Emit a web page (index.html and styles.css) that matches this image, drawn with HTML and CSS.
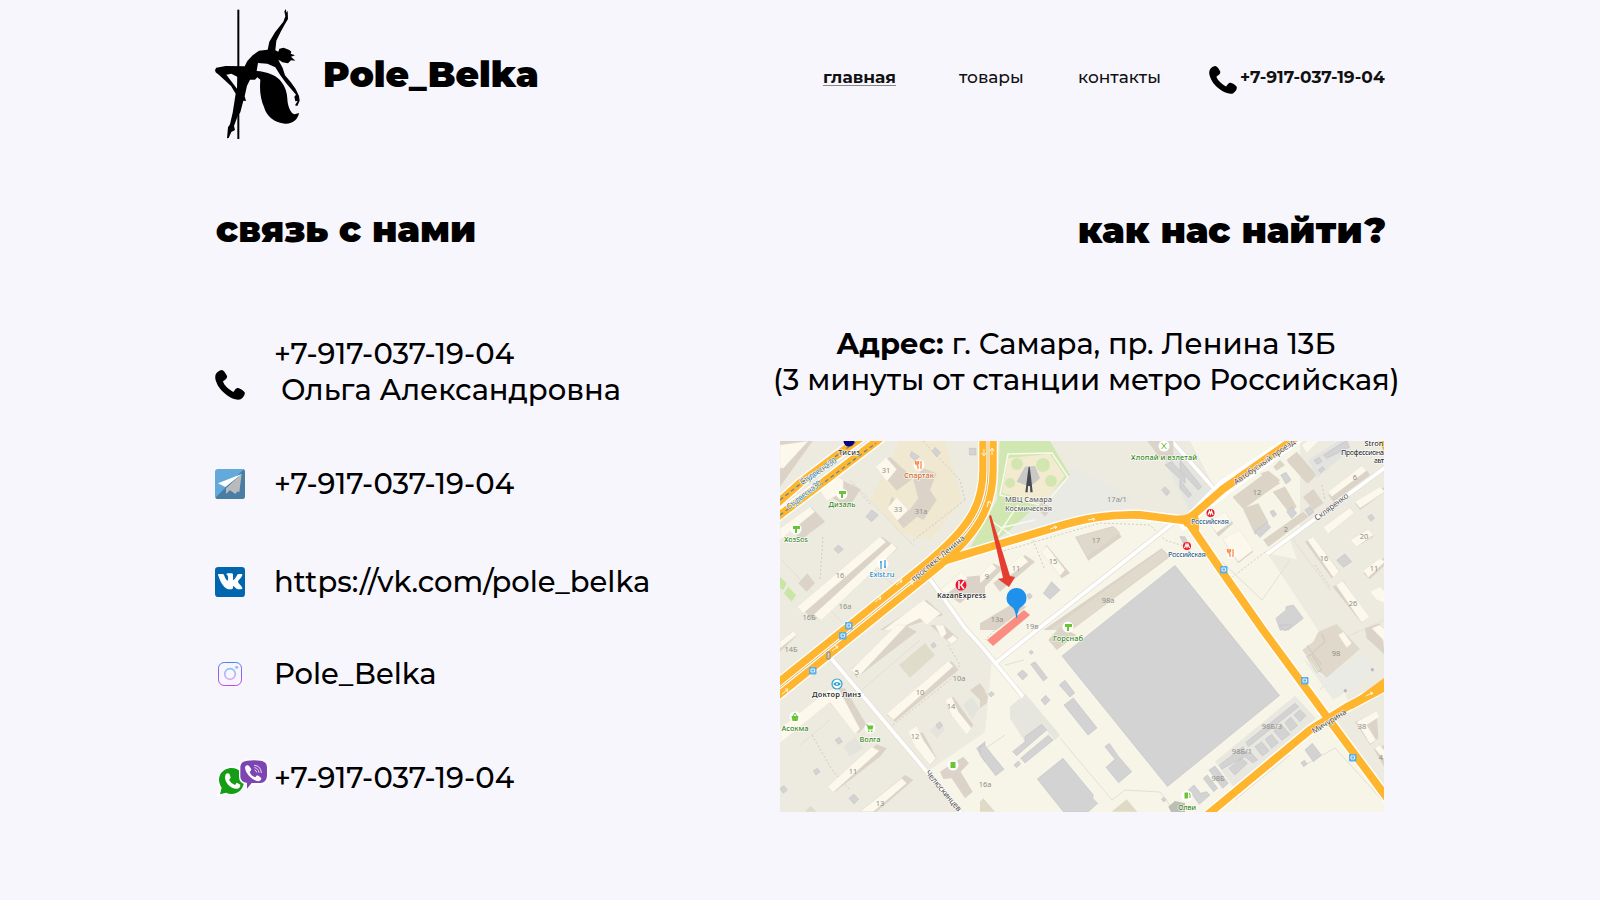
FILE: index.html
```html
<!DOCTYPE html>
<html lang="ru">
<head>
<meta charset="utf-8">
<title>Pole_Belka</title>
<link rel="stylesheet" href="styles.css">
</head>
<body>
<svg width="0" height="0" class="defs">
  <symbol id="phone" viewBox="0 0 90 90">
    <path d="M4 10C9 4 15 0 21 0C27 2 31 8 36 18C37 23 35 27 24 34C27 46 39 57 55 66C59 61 62 55 67 54C72 53 86 61 89 67C91 73 86 82 77 88C70 91 56 88 44 81C25 69 10 54 4 36C0 27 -1 17 4 10Z"/>
  </symbol>
</svg>
<div class="page">
  <header class="header">
    <div class="brand">
      <svg class="logo" viewBox="0 0 315 435">
        <path d="M97 29h6v388h-6z"/>
        <path d="M238 34L243 27L244 38L248 32L249 57L240 72L228 94L214 122L211 151L220 155L223 146L236 143L253 150L259 155L257 161L270 166L258 170L271 182L258 181L249 190L232 187L226 182L220 180L233 204L240 226L257 246L272 267L282 288L284 302L277 318L270 316L278 303L271 304L268 290L273 284L243 249L226 226L211 202L187 191L159 189L155 213C184 215 209 224 224 239C241 258 246 277 247 296C248 317 256 339 269 343L282 339C279 357 265 372 240 371C208 368 185 350 177 321C167 298 163 274 166 239L157 232L150 239L135 239L126 257L119 289L123 303L115 302L106 337L98 348L87 378L90 390L79 396L71 414L66 415L69 382L75 373L83 338L92 281L78 258L43 226L32 217L30 210L34 203L62 198L119 199L127 183L143 166L162 152L188 149L193 125L210 97L235 65L241 49ZM64 224L96 266L98 231L79 221Z"/>
      </svg>
      <span class="brand-name">Pole_Belka</span>
    </div>
    <nav class="nav">
      <a class="nav-link nav-link-active">главная</a>
      <a class="nav-link nav-goods">товары</a>
      <a class="nav-link nav-contacts">контакты</a>
      <svg class="nav-phone-icon"><use href="#phone"/></svg>
      <a class="nav-link nav-phone">+7-917-037-19-04</a>
    </nav>
  </header>

  <main class="main">
    <section class="contacts">
      <h2 class="title title-left">связь с нами</h2>
      <ul class="list">
        <li class="row row-person">
          <svg class="icon icon-call"><use href="#phone"/></svg>
          <div class="text"><div class="digits">+7-917-037-19-04</div><div class="person">Ольга Александровна</div></div>
        </li>
        <li class="row row-telegram">
          <svg class="icon" viewBox="0 0 90 90">
            <rect width="90" height="90" rx="9" fill="#64a9dc"/>
            <path d="M90 9V81Q90 90 81 90H9Q4 90 1 86L86 1Q90 4 90 9Z" fill="#4a7da3"/>
            <path d="M80 15L9 43L31 54L80 15L35 58L34 74Z" fill="#fff"/>
            <path d="M80 15L34 58L33 73L45 64L61 75L68 67L73 70Z" fill="#b8babc"/>
          </svg>
          <div class="text digits">+7-917-037-19-04</div>
        </li>
        <li class="row row-vk">
          <svg class="icon" viewBox="0 0 90 90">
            <rect width="90" height="90" rx="10" fill="#0067ae"/>
            <path d="M9 23Q8 21 11 21H23Q26 21 27 24C30 33 34 40 37 41Q40 40 39 29Q38 24 34 22Q34 19 40 19H51Q54 20 54 24V38Q57 42 66 25Q68 21 71 21H80Q83 22 82 25C79 34 69 40 69 45C70 50 80 56 82 63Q83 67 77 67H69C63 67 59 58 55 57Q54 57 54 61Q54 67 50 67H46C29 67 18 51 9 23Z" fill="#fff"/>
          </svg>
          <div class="text vk">https://vk.com/pole_belka</div>
        </li>
        <li class="row row-insta">
          <svg class="icon" viewBox="0 0 90 90">
            <defs><linearGradient id="ig" x1="0" y1="0" x2="0" y2="1"><stop stop-color="#4e82f2"/><stop offset="1" stop-color="#c04bea"/></linearGradient>
            <linearGradient id="ig2" x1="0" y1="0" x2="0" y2="1"><stop stop-color="#83c4f8"/><stop offset="1" stop-color="#dba7fb"/></linearGradient></defs>
            <rect x="10.500" y="10.500" width="69" height="69" rx="17" fill="none" stroke="url(#ig)" stroke-width="3"/>
            <circle cx="45" cy="45" r="16" fill="none" stroke="url(#ig2)" stroke-width="5"/>
            <circle cx="65" cy="25" r="4.500" fill="#96bcfa"/>
          </svg>
          <div class="text insta">Pole_Belka</div>
        </li>
        <li class="row row-messengers">
          <svg class="icon-pair" viewBox="45 920 162 126">
            <circle cx="95" cy="990" r="42" fill="#fff"/>
            <path d="M49 1040L63 1000L80 1026Z" fill="#fff"/>
            <path d="M60 1032L65 1012C45 980 67 953 95 953C117 953 132 972 132 992C132 1022 103 1039 78 1027Z" fill="#159d15"/>
            <path d="M77 972Q82 966 88 970L92 981Q91 986 87 989Q94 1001 105 1004L110 997Q114 998 121 1003C122 1016 108 1018 98 1013C84 1007 70 989 77 972Z" fill="#fff"/>
            <path d="M146 926H180Q206 928 206 950V980Q204 1003 180 1003H157L138 1022V1002Q117 998 117 979V951Q118 928 146 926Z" fill="#fff"/>
            <path d="M142 931C154 929 170 929 182 931Q201 934 201 950V977Q199 997 181 998H155L141 1015V998Q123 996 121 980V949Q122 933 142 931Z" fill="#7d45b2"/>
            <path d="M140 945Q144 943 148 948L154 957Q154 961 149 965Q154 978 166 981L171 975Q176 975 184 984Q184 991 175 993C156 989 137 970 135 952Q135 948 140 945Z" fill="#fff"/>
            <path d="M162 945Q183 946 184 968M163 952Q175 953 177 967M164 959Q169 960 170 966" fill="none" stroke="#eadcf5" stroke-width="3"/>
          </svg>
          <div class="text digits">+7-917-037-19-04</div>
        </li>
      </ul>
    </section>

    <section class="location">
      <h2 class="title title-right">как нас найти?</h2>
      <div class="address">
        <div class="addr-1"><b>Адрес:</b> г. Самара, пр. Ленина 13Б</div>
        <div class="addr-2">(3 минуты от станции метро Российская)</div>
      </div>
      <svg class="map" viewBox="780 441 604 371">
        <rect x="780" y="441" width="604" height="371" fill="#edebe0"/>
        <!-- land -->
        <path d="M925 570L1000 549L1110 517L1190 522L1300 441V560L1267 553L1384 730V812H960L927 772L985 732L992 660Z" fill="#f7f5e8"/>
        <path d="M1190 441H1300L1217 492Z" fill="#f7f5e8"/>
        <path d="M1290 540L1384 470V690L1350 707Z" fill="#edebe0"/>
        <path d="M1332 722L1372 698L1384 705V790Z" fill="#edebe0"/>
        <path d="M1003 532L1072 465L1135 500L1110 512L1050 524Z" fill="#e9eae4"/>
        <path d="M1155 441H1172L1216 492L1190 512Z" fill="#e6e6e1"/>
        <path d="M900 441H945L962 500L930 540L900 533L870 500Z" fill="#f0e8d0"/>
        <path d="M1000 441H1050L1070 475L1010 530L994 541L970 548L997 500Z" fill="#d0e7b1"/>
        <path d="M1008 458L1050 454L1065 476L1042 504L1002 493Z" fill="#f2ebcf"/>
        <g fill="#d3e6b2"><circle cx="1017" cy="464" r="6"/><circle cx="1043" cy="465" r="7"/><circle cx="1051" cy="481" r="6"/><circle cx="1010" cy="483" r="5"/></g>
        <path d="M1008 454L1052 453L1068 477L1044 506L1000 495ZM990 520L1030 548M998 535L1018 505M1000 528L1035 520" class="path-white"/>
        <!-- footpaths -->
        <g class="dotted">
          <path d="M823 537L820 580M870 504L850 480M923 441L960 480L965 500M1000 552L1100 523L1150 525L1165 540L1184 546M1033 540L1045 570M1265 552L1230 579M893 725L950 680L960 665L948 645M812 735L832 770L850 790M1315 565L1330 587M1322 485L1325 500M965 500L910 543M1000 625L985 640"/>
        </g>
        <g class="thin">
          <path d="M782 560L810 590L850 630M850 480L915 547M905 625L880 655M850 700L920 640M1005 735L980 752M1024 660L1005 665M1060 738L1112 800L1125 790L1160 792L1172 808M1305 765L1335 748L1384 802M1235 800L1290 755M830 720L800 745M1220 560L1262 600L1290 560M1290 535L1330 590M1340 640L1384 620M875 570L900 590M1320 690L1350 650"/>
        </g>
        <!-- white streets -->
        <g class="street-edge"><path d="M830 657L927 772L962 814M927 575L965 628L983 648L1057 738M1182 516L1037 630L997 662M1171 440L1217 492M1267 554L1386 467"/></g>
        <g class="street"><path d="M830 657L927 772L962 814M927 575L965 628L983 648L1057 738M1182 516L1037 630L997 662M1171 440L1217 492M1267 554L1386 467"/></g>

        <!-- north-west quarter -->
        <g transform="translate(780 440) scale(.33333)">
          <g class="side">
            <path d="M0 0H100L0 140Z"/><path d="M330 50L400 115L350 152L290 82Z"/><path d="M165 110L242 148L205 205L120 150Z"/><path d="M95 202L135 245L65 298L30 270Z"/><path d="M335 170L412 230L370 265L325 205Z"/><path d="M305 290L355 325L105 540L55 500Z"/><path d="M540 400L590 450L540 490L480 450Z"/><path d="M560 410L615 405V480L560 450Z"/><path d="M440 480L490 525L350 570H300Z"/><path d="M82 400L105 430L80 455L55 430Z"/>
            <path d="M400 120L430 85L470 100L450 150L470 180L430 240L385 215L415 175Z"/>
          </g>
          <g class="bld">
            <path d="M0 15L85 3L10 85H0ZM318 52L350 88L320 125L287 80ZM165 108L190 120V155L140 183L118 148ZM90 200L105 215L0 300V265ZM350 172L385 210L352 242L322 205ZM300 290L318 306L70 520L52 500ZM335 310L352 325L125 540L100 525ZM545 395L562 415L500 462L480 450ZM430 480L482 520L440 555L420 535L350 570H310Z"/>
          </g>
          <g class="grey"><path d="M275 210L295 225L275 245L258 230ZM395 35L418 50L405 62L390 48ZM465 22L482 38L470 50L457 35ZM568 25H588V45H568ZM175 315L190 328L175 340L162 328Z"/></g>
          <path d="M0 410L20 430L10 450L0 445ZM25 440L48 465L35 485L12 460Z" fill="#c8e7a4"/>
        </g>
        <!-- centre-north -->
        <g transform="translate(980 440) scale(.33333)">
          <g class="side"><path d="M285 290L400 258L425 290L325 362Z"/><path d="M200 315L270 400L245 415L185 335Z"/><path d="M40 370L70 385L0 455V410Z"/><path d="M135 345L165 365L60 455L40 430Z"/><path d="M545 325L570 350L275 570H190Z"/><path d="M100 490L140 500L50 570H0V550Z"/><path d="M185 185L215 205L195 230L170 205Z"/><path d="M500 0H580V65L540 55Z"/></g>
          <g class="bld"><path d="M200 318L255 390L240 408L183 335ZM35 370L50 385L0 430V405ZM125 345L145 365L65 425L55 405Z"/></g>
          <path d="M290 290L405 262L420 278L320 350Z" fill="#dfd9cc"/>
          <path d="M545 330L565 350L275 570H210Z" fill="#e0dacd"/>
          <g class="grey"><path d="M215 425L240 450L210 478L190 460ZM555 140L570 155L560 167L545 150ZM555 75L575 65L615 110V130ZM600 290L615 300V310ZM140 465L150 460L157 470L147 478Z"/></g>
          <path d="M135 80L165 78L180 115L150 140L110 125Z" fill="#c9c9c6"/>
          <path d="M146 80L149 80L153 110L158 157H151L150 138H144L143 157H136L142 110Z" fill="#484951"/>
        </g>
        <!-- north-east -->
        <g transform="translate(1180 440) scale(.33333)">
          <g class="side"><path d="M160 170L265 92L300 130L190 200Z"/><path d="M190 205L235 190L265 250L225 285Z"/><path d="M280 155L315 140L350 200L330 220Z"/><path d="M320 60L350 35L410 105L385 130Z"/><path d="M370 170L400 148L430 190L400 210Z"/><path d="M250 300L370 215L385 230L265 320Z"/><path d="M90 250L135 220L160 250L115 290Z"/><path d="M130 300L155 290L220 335L175 370Z"/><path d="M445 165L560 90L570 105L460 185Z"/><path d="M435 260L510 200L520 215L450 280Z"/><path d="M525 190L615 140V155L540 210Z"/><path d="M375 305L400 290L480 395L455 415Z"/><path d="M458 440L490 422L565 530L545 550Z"/><path d="M510 300L560 270L580 290L530 320Z"/><path d="M550 400L615 350V375L570 418Z"/></g>
          <g class="bld"><path d="M445 155L545 78L560 92L455 170ZM430 262L510 202L522 218L445 282ZM525 185L600 140L615 155L540 205ZM382 300L400 290L478 395L460 412ZM468 435L488 422L568 530L545 548ZM510 300L565 268L580 285L530 320ZM550 392L600 355L615 365L565 412ZM128 298L178 270L220 330L175 365ZM85 245L135 215L155 245L110 278ZM570 455L600 440L615 455V490L590 480ZM365 15L385 0H420L380 38Z"/></g>
          <path d="M158 172L250 110L242 100L265 92L300 120L290 135L190 208ZM190 210L235 192L265 245L225 280ZM278 155L315 140L345 195L325 215ZM322 65L345 42L402 110L380 130ZM370 172L400 148L430 190L400 208ZM250 300L365 218L382 232L265 320ZM280 80L300 60L315 75L290 92Z" fill="#dcd5c7"/>
          <path d="M385 60L480 0L515 25L410 115Z" fill="#e3e4e1"/>
          <g class="grey"><path d="M225 275L260 248L272 262L240 292ZM320 215L335 200L350 220L335 235ZM375 210L390 200L402 215L387 228ZM302 105L318 97L333 120L318 132ZM430 45L500 0L508 22L440 55ZM403 60L418 52L425 65L411 73ZM415 90L428 80L434 88L422 98ZM270 215L280 210L290 223L280 232ZM0 60L65 140L55 150L0 90ZM0 120L35 165L25 172L0 145ZM470 360L495 342L515 365L490 382ZM563 230L575 223L583 235L573 244ZM288 535L318 510V500L340 495L370 535L325 570H300ZM0 290L15 290L22 305L10 310Z"/></g>
        </g>
        <!-- south-west -->
        <g transform="translate(780 625) scale(.33333)">
          <g class="side"><path d="M0 55L35 20L50 32L0 80Z"/><path d="M375 0L410 20L230 158L215 130Z"/><path d="M515 108L535 135L345 290L320 270Z"/><path d="M175 190L195 190L260 300L235 325L150 235Z"/><path d="M495 225L520 215L580 300L560 330Z"/><path d="M390 315L430 325L470 400L450 420Z"/><path d="M290 358L320 370L300 395L165 500L145 485Z"/><path d="M375 450L400 465L290 560H240Z"/><path d="M490 0L535 40L515 60L450 0Z"/><path d="M480 440L550 395L567 415L542 440L578 500L555 520L515 460L490 462Z"/><path d="M570 195L600 175L615 195V240Z"/></g>
          <g class="bld"><path d="M0 50L40 18L50 30L0 70ZM350 0H380L235 155L213 135ZM505 108L520 124L340 285L320 266ZM495 225L515 215L535 260L575 310L560 330L515 272ZM385 320L410 302L430 345L468 400L450 420L405 365ZM275 365L298 378L160 502L143 485ZM365 460L380 475L280 560H240ZM0 310L145 195L175 190L240 312L225 327L150 232L0 355ZM465 0H490L500 25L485 40ZM500 45L520 30L533 42L515 58Z"/></g>
          <path d="M357 120L435 55L465 90L390 158ZM75 560L92 542L110 560Z" fill="#dfdcc9"/>
          <path d="M190 365L225 335L250 370L210 395ZM550 240L575 215L600 250L575 285ZM450 315L480 290L495 315L470 340Z" fill="#e4e4dd"/>
          <g class="grey"><path d="M165 345L178 337L187 350L175 358ZM100 437L112 430L120 440L108 450ZM0 490L12 482L22 494L10 505ZM207 520L222 508L236 522L222 537ZM452 60L462 52L469 62L460 70ZM468 300L480 290L488 302L475 312ZM590 370L615 350V410Z"/></g>
        </g>
        <!-- south-centre -->
        <g transform="translate(980 625) scale(.33333)">
          <path d="M205 45L240 5L290 30L230 75Z" fill="#dcd5c7"/>
          <path d="M135 205L240 330L225 345L120 230ZM90 245L120 220L190 300L135 350L90 280Z" fill="#e6e6df"/>
          <g class="grey"><path d="M112 147L128 135L143 150L128 165ZM152 118L165 110L202 158L190 168ZM238 180L255 166L284 204L270 216ZM183 225L197 211L210 226L195 240ZM252 240L280 219L351 309L324 330ZM375 365L388 355L416 395L455 440L416 473L378 427L405 403ZM172 462L249 400L340 510L338 520L353 535L325 560H250ZM98 380L135 350V335L185 298L200 315L110 392ZM122 400L205 330L220 345L135 414ZM0 365L13 360L72 433L47 452L0 390ZM102 420L115 408L122 416L110 428ZM25 208L35 199L43 208L33 216ZM147 81L155 76L160 83L152 88ZM544 523L551 517L559 524L551 531Z"/></g>
          <path d="M0 210L10 190L24 215L20 235L0 250Z" fill="#dcd5c7"/>
          <path d="M395 560L440 523L472 560ZM0 530L10 520L45 560H0Z" fill="#dfdac5"/>
          <path d="M565 545L585 528L615 535V565H575Z" fill="#bfbeb6"/>
        </g>
        <!-- south-east -->
        <g transform="translate(1180 625) scale(.33333)">
          <path d="M105 410L345 212L408 280L160 485Z" fill="#e8e8e1"/>
          <path d="M365 95L430 155L500 120L555 90L590 140L460 225Z" fill="#e9ebe4"/>
          <path d="M367 75L400 50L415 20L470 -3L540 72L440 158L430 150L410 135Z" fill="#e0d9cb"/>
          <path d="M380 60L425 120M395 88L425 135L410 142L380 95ZM425 25L435 50L395 85" fill="none" stroke="#c6bdad" stroke-width="2"/>
          <g class="side"><path d="M555 10L600 -5L615 90L560 40Z"/><path d="M525 290L590 260L595 340L570 360Z"/><path d="M580 370L615 360V430Z"/></g>
          <g class="bld"><path d="M475 30L490 20L515 55L500 68ZM575 10L600 0L615 15V50ZM530 290L590 258L598 275L560 300L588 345L570 357ZM583 370L600 360L615 380V405Z"/></g>
          <g class="grey"><path d="M198 352L345 235L356 245L205 365ZM225 365L245 350L267 378L247 393ZM256 343L275 328L295 353L275 370ZM282 318L305 300L330 328L305 346ZM315 293L332 276L352 302L332 318ZM342 270L360 254L378 272L360 290ZM118 420L190 365L195 380L215 385L233 405L218 413L195 395L125 432ZM147 430L185 400L202 415L165 450ZM87 435L105 423L145 475L128 490ZM70 460L82 450L113 490L101 500ZM25 495L42 480L62 505L80 500L90 510L58 538ZM375 375L397 355L424 390L400 410ZM363 413L373 406L382 417L371 425ZM298 0H335L315 18Z"/></g>
          <circle cx="496" cy="197" r="5" fill="#b9b9b9"/><circle cx="577" cy="134" r="5" fill="#b9b9b9"/>
        </g>
        <path d="M1175 565.500L1279.500 695.500L1167.500 786.500L1062 656Z" fill="#d3d3d3" stroke="#bdbdc2" stroke-width=".5"/>

        <!-- main roads -->
        <g class="road-edge">
          <path d="M772 508L800 483L833 458L862 437M772 521L813 490L882 437M925 568L947 560L980 550L1053 528C1085 518 1110 514 1140 515L1188 521M1187 521L1223 485L1295 438M1184 516L1223 573L1263 630L1327 717L1390 802M1200 821L1310 730L1347 707L1390 684"/>
        </g>
        <path d="M772 694L858 625L930 567C975 530 988 505 988 470V438" fill="none" stroke="#fff" stroke-width="20"/>
        <path d="M772 694L858 625L930 567C975 530 988 505 988 470V438" fill="none" stroke="#ffb62e" stroke-width="17.500"/>
        <path d="M772 694L858 625L930 567C975 530 988 505 988 470V438" fill="none" stroke="#fff" stroke-width="3"/>
        <path d="M772 694L858 625L930 567C975 530 988 505 988 470V438" fill="none" stroke="#d9b266" stroke-width="1"/>
        <path d="M1180 527L1223 492L1301 436" stroke="#fff" stroke-width="10" fill="none"/>
        <g class="road">
          <path d="M772 508L800 483L833 458L862 437M772 521L813 490L882 437M925 568L947 560L980 550L1053 528C1085 518 1110 514 1140 515L1188 521M1183 524L1223 489L1297 437M1184 516L1223 573L1263 630L1327 717L1390 802M1200 821L1310 730L1347 707L1390 684"/>
        </g>
        <path d="M1172 516L1186 515L1196 509L1199 520L1199 535L1182 522ZM1350 703L1384 678V692L1352 709Z" fill="#ffb62e"/>
        <path d="M780 500L832 459L857 441M780 515L813 491L876 443" fill="none" stroke="#4e86a8" stroke-width="1.200" stroke-dasharray="4 3"/>
        <g class="arrows">
          <path d="M875 602l5-4m-2-1l3 0-1 3M896 585l5-4m-2-1l3 0-1 3M907 587l5-4m-2-1l3 0-1 3M832 651l5-4m-2-1l3 0-1 3M782 694l5-4m-2-1l3 0-1 3M1050 529l6-2m-2-1l3 1-2 2M1088 520l6-1m-2-1l3 1-2 2M1366 696l6-3m-2-1l3 1-2 2M984 449v6m-2-2l2 3 2-3M992 455v-6m-2 2l2-3 2 3M987 507l2-6m-2 2l3-2 1 3"/>
        </g>
        <circle cx="849" cy="441" r="5.500" fill="#040182"/>
        <path d="M1378 441H1384V451Z" fill="#ffb62e"/>
        <path d="M827 652h3v7h-3z" fill="#d6d0c2" stroke="#8b8677"/>

        <!-- markers -->
        <g class="halo"><circle cx="919" cy="465" r="5.500"/><circle cx="842" cy="494" r="5.500"/><circle cx="796" cy="529" r="5.500"/><circle cx="883" cy="564" r="5.500"/><circle cx="1164" cy="446" r="5.500"/><circle cx="1068" cy="627" r="5.500"/><circle cx="1231" cy="553" r="5.500"/><circle cx="795" cy="717" r="5.500"/><circle cx="870" cy="728" r="5.500"/><circle cx="953" cy="765" r="5.500"/><circle cx="1187" cy="796" r="5.500"/></g>
        <g fill="none" stroke="#ff8138" stroke-width="1.200"><path d="M917 461v3q0 2 1 2v3M921 461v8M915.500 461v3h3v-3M1229 549v3q0 2 1 2v3M1233 549v8M1227.500 549v3h3v-3"/></g>
        <g fill="#69c532"><path d="M839 491h7v3h-3v4h-2v-4h-2zM793 526h7v3h-3v4h-2v-4h-2zM1065 624h7v3h-3v4h-2v-4h-2zM791.500 716h7l-1 5h-5zM867 725.500h6.500l-1 4h-4.500zM868 730.500h1.500v1.500h-1.500zM871 730.500h1.500v1.500h-1.500zM950.500 762h5v6h-5zM1184.500 792.500h3.500v6h-3.500z"/></g>
        <path d="M1161.500 443l5 6M1166.500 443l-5 6M793 716l2-3 2 3M866 725h2M1189 793l1 1v4" stroke="#69c532" fill="none" stroke-width="1"/>
        <path d="M881 561v8M885 560v8M880 562h2M884 567h2" stroke="#4ba8dc" stroke-width="1.400"/>
        <circle cx="837" cy="684" r="5" fill="#fff" stroke="#2ba2cf" stroke-width="1.200"/><path d="M833 684q4-4 8 0q-4 4-8 0z" fill="#2ba2cf"/><circle cx="837" cy="684" r="1" fill="#fff"/>
        <circle cx="961" cy="585" r="5.500" fill="#ed1734"/><path d="M959 581v8M964 581l-3 4 3 4" stroke="#fff" stroke-width="1.500" fill="none"/>
        <g><circle cx="1210.500" cy="513" r="4" fill="#ed1524"/><circle cx="1187" cy="546" r="4" fill="#ed1524"/><path d="M1208 515l1.500-4 1 3 1-3 1.500 4M1184.500 548l1.500-4 1 3 1-3 1.500 4" fill="none" stroke="#fff" stroke-width="1.200"/></g>
        <g class="stops"><rect x="845" y="622" width="7.500" height="7.500" rx="1"/><rect x="839" y="632" width="7.500" height="7.500" rx="1"/><rect x="809" y="667" width="7.500" height="7.500" rx="1"/><rect x="1220" y="566" width="7.500" height="7.500" rx="1"/><rect x="1301" y="677" width="7.500" height="7.500" rx="1"/><rect x="1349" y="754" width="7.500" height="7.500" rx="1"/></g>
        <g fill="none" stroke="#fff" stroke-width=".8"><path d="M847 624h3.500v3h-3.500zM841 634h3.500v3h-3.500zM811 669h3.500v3h-3.500zM1222 568h3.500v3h-3.500zM1303 679h3.500v3h-3.500zM1351 756h3.500v3h-3.500z"/></g>

        <!-- house numbers -->
        <g class="num"><text x="886" y="473">31</text><text x="898" y="512">33</text><text x="921" y="514">31а</text><text x="840" y="578">16</text><text x="845" y="609">16а</text><text x="809" y="620">16Б</text><text x="1117" y="501.500">17а/1</text><text x="1096" y="542.500">17</text><text x="1053" y="564">15</text><text x="1016" y="571">11</text><text x="987" y="579">9</text><text x="1108" y="603">98а</text><text x="997" y="621.500">13а</text><text x="1032" y="628.500">19в</text><text x="1257" y="494.500">12</text><text x="1286" y="532">2</text><text x="1355" y="479.500">6</text><text x="1364" y="539">20</text><text x="1324" y="560.500">16</text><text x="1374" y="571">11</text><text x="1353" y="605.500">26</text><text x="791" y="652">14Б</text><text x="857" y="674.500">5</text><text x="920" y="694.500">10</text><text x="959" y="680.500">10а</text><text x="951" y="708.500">14</text><text x="915" y="739">12</text><text x="853" y="773.500">11</text><text x="880" y="805.500">13</text><text x="985" y="786.500">16а</text><text x="1336" y="656">98</text><text x="1272" y="728.500">98Б/3</text><text x="1242" y="753.500">98Б/1</text><text x="1218" y="780.500">98Б</text><text x="1362" y="729">38</text><text x="1381" y="760">4</text></g>
        <!-- places -->
        <g class="place">
          <text x="849" y="454.500" textLength="22">Тисиз</text>
          <text x="919" y="478" textLength="30" fill="#cf6a26">Спартак</text>
          <text x="842" y="507" textLength="27" class="green">Дизаль</text>
          <text x="796" y="542" textLength="24" class="green">ХозSos</text>
          <text x="882" y="577" textLength="25" fill="#168ac7">Exist.ru</text>
          <text x="961.500" y="598" textLength="49" font-weight="600">KazanExpress</text>
          <text x="1028.500" y="501.500" textLength="47" fill="#5f5f60">МВЦ Самара</text>
          <text x="1028.500" y="510.500" textLength="47" fill="#5f5f60">Космическая</text>
          <text x="1164" y="460" textLength="66" class="green">Хлопай и взлетай</text>
          <text x="1068" y="641" textLength="30" class="green">Горснаб</text>
          <text x="1210" y="523.500" textLength="38" fill="#356486">Российская</text>
          <text x="1187" y="556.500" textLength="38" fill="#356486">Российская</text>
          <text x="1374" y="446" textLength="19">Stron</text>
          <text x="1341" y="455" class="start" textLength="43">Профессиона</text>
          <text x="1374" y="463" class="start" textLength="10">авт</text>
          <text x="836.500" y="697" textLength="49" font-weight="600">Доктор Линз</text>
          <text x="795" y="731" textLength="27" class="green">Асокма</text>
          <text x="870" y="742" textLength="21" class="green">Волга</text>
          <text x="1187" y="809.500" textLength="18" class="green">Олви</text>
        </g>
        <g class="street-name">
          <text transform="translate(802 485) rotate(-33)" textLength="42" fill="#367ea6">Студвесна30</text>
          <text transform="translate(789 510) rotate(-38)" textLength="42" fill="#367ea6">Студвесна30</text>
          <text transform="translate(914 582) rotate(-40)" textLength="67">проспект Ленина</text>
          <text transform="translate(1236 485) rotate(-35)" textLength="73">Автобусный проезд</text>
          <text transform="translate(1317 521) rotate(-37)" textLength="40">Скляренко</text>
          <text transform="translate(1314 734) rotate(-32)" textLength="39">Мичурина</text>
          <text transform="translate(925 773) rotate(50)" textLength="51">Челюскинцев</text>
        </g>
        <!-- destination -->
        <path d="M1024 610L1030 615L993 646L987 640Z" fill="#fb8c82"/>
        <path d="M989 516L991 515L1010 576L1015 577L1009 587L998 579L1003 578Z" fill="#e53d2f"/>
        <path d="M1016 618Q1016 609 1010 605.500A10 10 0 1 1 1023 605.500Q1017 609 1017 618Z" fill="#2090ed"/>
      </svg>
    </section>
  </main>
</div>
</body>
</html>
```
FILE: styles.css
```css
* { box-sizing: border-box; }
body { margin: 0; background: #f8f6fd; color: #000; font-family: Montserrat, Inter, "Open Sans", sans-serif; font-weight: 500; }
.defs { display: block; }
.page { width: 1600px; height: 900px; padding: 0 201px 0 215px; overflow: hidden; }
.header { display: flex; justify-content: space-between; height: 150px; padding-right: 13px; }
.brand { display: flex; align-items: flex-start; }
.logo { width: 105px; height: 145px; margin-left: -10px; }
.brand-name { margin: 52px 0 0 13px; font-size: 36px; line-height: 44px; font-weight: 900; white-space: nowrap; }
.nav { display: flex; align-items: flex-start; padding-top: 66px; }
.nav-link { font-size: 17px; line-height: 22px; color: #111; white-space: nowrap; }
.nav-link-active { width: 73px; height: 20px; font-weight: 700; border-bottom: 1px solid #888; }
.nav-goods { width: 65px; margin-left: 63px; }
.nav-contacts { width: 83px; margin-left: 54px; }
.nav-phone-icon { width: 28px; height: 28px; margin-left: 48px; }
.nav-phone { width: 146px; margin-left: 3px; font-weight: 700; }
.main { display: grid; grid-template-columns: 558px 626px; }
.title { margin: 0; font-size: 36px; line-height: 44px; font-weight: 900; white-space: nowrap; }
.title-left { padding: 57px 0 0 1px; }
.title-right { padding: 58px 13px 0 0; text-align: right; }
.list { list-style: none; margin: 85px 0 0; padding: 0; }
.row { display: flex; align-items: center; height: 36px; font-size: 29px; line-height: 36px; white-space: nowrap; }
.row-person { height: 72px; }
.row-telegram { margin-top: 58px; }
.row-vk { margin-top: 62px; }
.row-insta { margin-top: 56px; }
.row-messengers { margin-top: 68px; }
.icon { width: 30px; height: 30px; margin-right: 29px; flex: none; }
.icon-call { margin-top: 26px; }
.icon-pair { width: 54px; height: 42px; margin-right: 5px; flex: none; }
.person { padding-left: 7px; }
.address { margin-top: 74px; font-size: 29px; line-height: 36px; text-align: center; white-space: nowrap; }
.map { display: block; width: 604px; height: 371px; margin: 43px 0 0 7px; font-family: "Noto Sans", "Open Sans", sans-serif; font-weight: 400; }
.side { fill: #dbd3c8; }
.bld { fill: #fcf9ec; stroke: #e3dccd; stroke-width: 1; }
.grey { fill: #d3d3d3; stroke: #bdbdc2; stroke-width: 1.500; }
.dotted { fill: none; stroke: #c8c3b7; stroke-width: .8; stroke-dasharray: 2 2; }
.path-white { fill: none; stroke: #f8faee; stroke-width: 1.500; }
.thin { fill: none; stroke: #e3e0d3; stroke-width: 1; }
.street-edge { fill: none; stroke: #dedbd1; stroke-width: 5; }
.street { fill: none; stroke: #fff; stroke-width: 3.800; }
.road-edge { fill: none; stroke: #fff; stroke-width: 10.500; }
.road { fill: none; stroke: #ffb62e; stroke-width: 7.800; }
.arrows { fill: none; stroke: #fff6df; stroke-width: 1; }
.halo { fill: #fff; }
.stops { fill: #5faee6; }
.num { font-size: 7.500px; fill: #8f8e8a; text-anchor: middle; }
.place { font-size: 7.500px; fill: #333; font-weight: 500; text-anchor: middle; paint-order: stroke; stroke: #fff; stroke-width: 1.200px; }
.green { fill: #388718; }
.start { text-anchor: start; }
.street-name { font-size: 8px; fill: #514e4a; paint-order: stroke; stroke: #fff; stroke-width: 1px; }
```
